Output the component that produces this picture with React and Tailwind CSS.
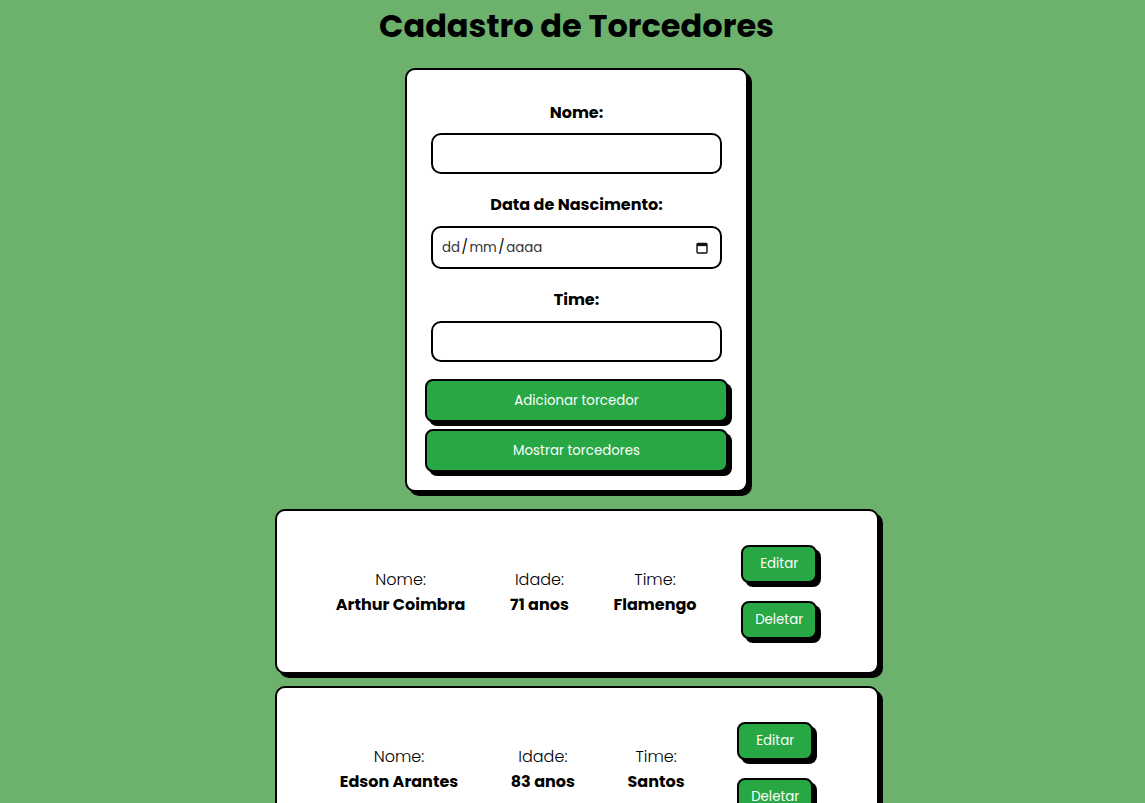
const torcedores = [
  { nome: "Arthur Coimbra", idade: 71, time: "Flamengo" },
  { nome: "Edson Arantes", idade: 83, time: "Santos" },
];

const CalendarIcon = () => (
  <svg width="12" height="12" viewBox="0 0 12 12" fill="none">
    <rect x="1" y="1.5" width="10" height="9.5" rx="1" stroke="#111" strokeWidth="1.4" />
    <rect x="1" y="1.5" width="10" height="2.6" fill="#111" />
  </svg>
);

const Campo = ({ label, first, children }) => (
  <div className={first ? "" : "mt-[19px]"}>
    <label className="block font-bold text-base leading-6 text-black">{label}</label>
    {children}
  </div>
);

const App = () => {
  return (
    <div className="min-h-screen bg-[#6cb26c] pl-[8px] pb-10 text-center text-black font-['Poppins','Open_Sans',sans-serif]">
      <h1 className="pt-[2px] text-[32px] leading-[48px] font-bold">Cadastro de Torcedores</h1>

      {/* formulario */}
      <div className="mt-[18px] mx-auto w-[343px] bg-white border-2 border-black rounded-[10px] shadow-[4px_4px_0_#000] px-[18px] pt-[31px] pb-[18px]">
        <Campo label="Nome:" first>
          <input type="text" className="mt-[8px] block mx-auto w-[291px] h-[41px] border-2 border-black rounded-[10px] px-2 outline-none" />
        </Campo>
        <Campo label="Data de Nascimento:">
          <div className="mt-[9px] mx-auto w-[291px] h-[43px] border-2 border-black rounded-[10px] flex items-center justify-between pl-[9px] pr-[12px] text-[13.33px]">
            <span className="text-[#333]">
              dd<span className="px-[1.5px] text-black">/</span>mm<span className="px-[1.5px] text-black">/</span>aaaa
            </span>
            <CalendarIcon />
          </div>
        </Campo>
        <Campo label="Time:">
          <input type="text" className="mt-[9px] block mx-auto w-[291px] h-[41px] border-2 border-black rounded-[10px] px-2 outline-none" />
        </Campo>
        <button className="mt-[17px] block w-full h-[43px] bg-[#28a745] text-white text-[13.33px] border-2 border-black rounded-[8px] shadow-[4px_4px_0_#000]">
          Adicionar torcedor
        </button>
        <button className="mt-[7px] block w-full h-[43px] bg-[#28a745] text-white text-[13.33px] border-2 border-black rounded-[8px] shadow-[4px_4px_0_#000]">
          Mostrar torcedores
        </button>
      </div>

      {/* lista */}
      <div className="mt-[17px] flex flex-col items-center gap-3">
        {torcedores.map((t) => (
          <div key={t.nome} className="w-[604px] h-[165px] bg-white border-2 border-black rounded-[10px] shadow-[4px_4px_0_#000] flex items-center justify-around px-[37px]">
            <div className="leading-[25px]">
              <p className="font-light">Nome:</p>
              <p className="font-bold">{t.nome}</p>
            </div>
            <div className="leading-[25px]">
              <p className="font-light">Idade:</p>
              <p className="font-bold">{t.idade} anos</p>
            </div>
            <div className="leading-[25px]">
              <p className="font-light">Time:</p>
              <p className="font-bold">{t.time}</p>
            </div>
            <div className="flex flex-col gap-[18px]">
              <button className="w-[76px] h-[38px] bg-[#28a745] text-white text-[13.33px] border-2 border-black rounded-[8px] shadow-[4px_4px_0_#000]">Editar</button>
              <button className="w-[76px] h-[38px] bg-[#28a745] text-white text-[13.33px] border-2 border-black rounded-[8px] shadow-[4px_4px_0_#000]">Deletar</button>
            </div>
          </div>
        ))}
      </div>
    </div>
  );
};

export default App;
